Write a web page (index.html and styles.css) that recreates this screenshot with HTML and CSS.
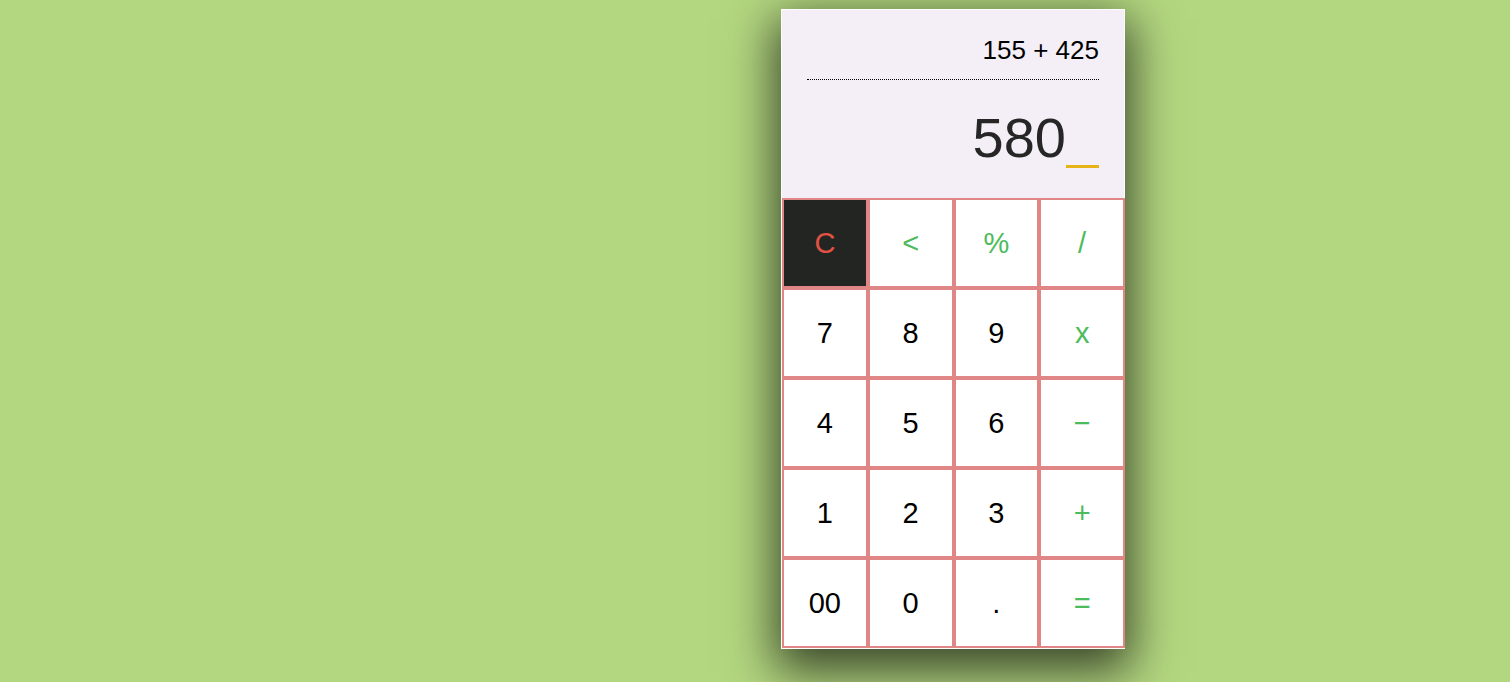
FILE: index.html
```html
<!DOCTYPE html>
<html lang="en">
<head>
<meta charset="utf-8">
<title>Calculator</title>
<link rel="stylesheet" href="styles.css">
</head>
<body>
<div class="stage">
  <div class="calc">
    <div class="display">
      <div class="expr">155 + 425</div>
      <div class="result"><span class="value">580</span><span class="cursor"></span></div>
    </div>
    <div class="keys">
      <button class="key key-clear">C</button>
      <button class="key op">&lt;</button>
      <button class="key op">%</button>
      <button class="key op">/</button>
      <button class="key">7</button>
      <button class="key">8</button>
      <button class="key">9</button>
      <button class="key op">x</button>
      <button class="key">4</button>
      <button class="key">5</button>
      <button class="key">6</button>
      <button class="key op">&minus;</button>
      <button class="key">1</button>
      <button class="key">2</button>
      <button class="key">3</button>
      <button class="key op">+</button>
      <button class="key">00</button>
      <button class="key">0</button>
      <button class="key">.</button>
      <button class="key op">=</button>
    </div>
  </div>
</div>
</body>
</html>
```

FILE: styles.css
```css
html, body {
  margin: 0;
  padding: 0;
  height: 100%;
}
body {
  background: #b3d780;
  font-family: "Liberation Sans", Arial, sans-serif;
  overflow: hidden;
}
.stage {
  display: flex;
  padding: 9px 0 0 781px;
}
.calc {
  box-sizing: border-box;
  width: 344px;
  border: 1px solid #ffffff;
  background: #ffffff;
  box-shadow: 0 16px 45px 6px rgba(0, 0, 0, 0.68);
  display: flex;
  flex-direction: column;
}
.display {
  background: #f4eff7;
  padding: 24px 25px 28px;
  text-align: right;
}
.expr {
  font-size: 26px;
  line-height: 32px;
  color: #000;
  padding-bottom: 13px;
  border-bottom: 1px dotted #000;
}
.result {
  margin-top: 26px;
  font-size: 56px;
  line-height: 64px;
  color: #262626;
}
.cursor {
  display: inline-block;
  width: 33px;
  height: 3px;
  background: #e6b419;
  vertical-align: -11px;
}
.keys {
  display: grid;
  grid-template-columns: repeat(4, 1fr);
  grid-auto-rows: 90px;
  margin-right: -1px;
}
.key {
  box-sizing: border-box;
  margin: 0;
  padding: 0;
  border: 2px solid #e08686;
  background: #ffffff;
  color: #000;
  font-family: "Liberation Sans", Arial, sans-serif;
  font-size: 29px;
  cursor: pointer;
}
.key.op {
  color: #4cbb5c;
}
.key-clear {
  background: #232523;
  color: #e25242;
}
```
